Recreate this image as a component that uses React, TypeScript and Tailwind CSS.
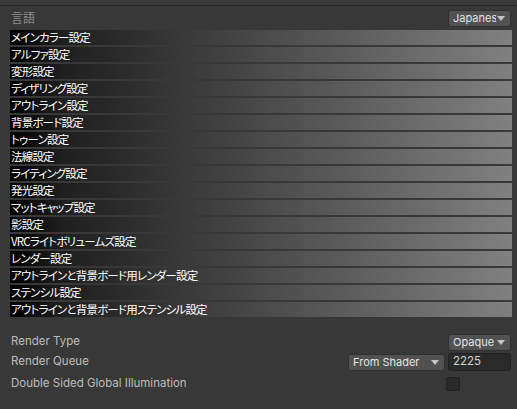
import React from 'react'

const sections = [
  'メインカラー設定',
  'アルファ設定',
  '変形設定',
  'ディザリング設定',
  'アウトライン設定',
  '背景ボード設定',
  'トゥーン設定',
  '法線設定',
  'ライティング設定',
  '発光設定',
  'マットキャップ設定',
  '影設定',
  'VRCライトボリュームズ設定',
  'レンダー設定',
  'アウトラインと背景ボード用レンダー設定',
  'ステンシル設定',
  'アウトラインと背景ボード用ステンシル設定',
]

const jp = {
  fontFamily: '"Noto Sans CJK JP", "Noto Sans", sans-serif',
  fontFeatureSettings: '"palt"',
}
const ui = { fontFamily: 'Inter, "Noto Sans", sans-serif' }

const Caret = () => (
  <svg width="8" height="5" viewBox="0 0 8 5" className="shrink-0">
    <path d="M0 0 H8 L4 5 Z" fill="#c4c4c4" />
  </svg>
)

const Dropdown = ({ label, className }: { label: string; className: string }) => (
  <div
    className={`relative flex items-center h-[17px] pl-[4px] rounded-[3px] bg-[#515151] border border-[#303030] text-[11px] text-[#e4e4e4] leading-none ${className}`}
    style={ui}
  >
    <span className="whitespace-nowrap">{label}</span>
    <div className="absolute right-[5px] top-[5px] bg-[#515151] pl-[1px]">
      <Caret />
    </div>
  </div>
)

export default function App() {
  return (
    <div className="w-[517px] h-[409px] bg-[#383838] flex flex-col overflow-hidden">
      <div className="h-[5px] bg-[#393939]" />
      <div className="h-[1px] bg-[#232323]" />

      <div className="flex items-center justify-between h-[23px] pl-[11px] pr-[6px] pt-[1px]">
        <span className="text-[12px] text-[#8e8e8e]" style={jp}>言語</span>
        <Dropdown label="Japanes" className="w-[63px]" />
      </div>

      <div className="flex flex-col gap-[2px] pl-[10px] pr-[5px] mt-[1px]">
        {sections.map((s) => (
          <div
            key={s}
            className="h-[15px] flex items-center pl-[1px] bg-[linear-gradient(to_right,#000000,#1e1e1e_10%,#808080)]"
          >
            <span className="text-[11.5px] tracking-[-0.8px] leading-none text-white whitespace-nowrap" style={jp}>
              {s}
            </span>
          </div>
        ))}
      </div>

      <div className="flex flex-col pl-[11px] pr-[6px] mt-[16px] text-[11.5px] text-[#bdbdbd]" style={ui}>
        <div className="flex items-center justify-between h-[18px]">
          <span>Render Type</span>
          <Dropdown label="Opaque" className="w-[63px]" />
        </div>
        <div className="flex items-center justify-between h-[18px] mt-[2px]">
          <span>Render Queue</span>
          <div className="flex items-center gap-[3px]">
            <Dropdown label="From Shader" className="w-[97px]" />
            <div className="w-[63px] h-[18px] rounded-[3px] bg-[#2a2a2a] border border-[#212121] flex items-center pl-[4px] text-[11.5px] text-[#d2d2d2]">
              2225
            </div>
          </div>
        </div>
        <div className="flex items-center justify-between h-[18px] mt-[4px]">
          <span>Double Sided Global Illumination</span>
          <div className="w-[64px] flex">
            <div className="w-[14px] h-[14px] rounded-[2px] bg-[#2a2a2a] border border-[#212121] -ml-[1px]" />
          </div>
        </div>
      </div>
    </div>
  )
}
